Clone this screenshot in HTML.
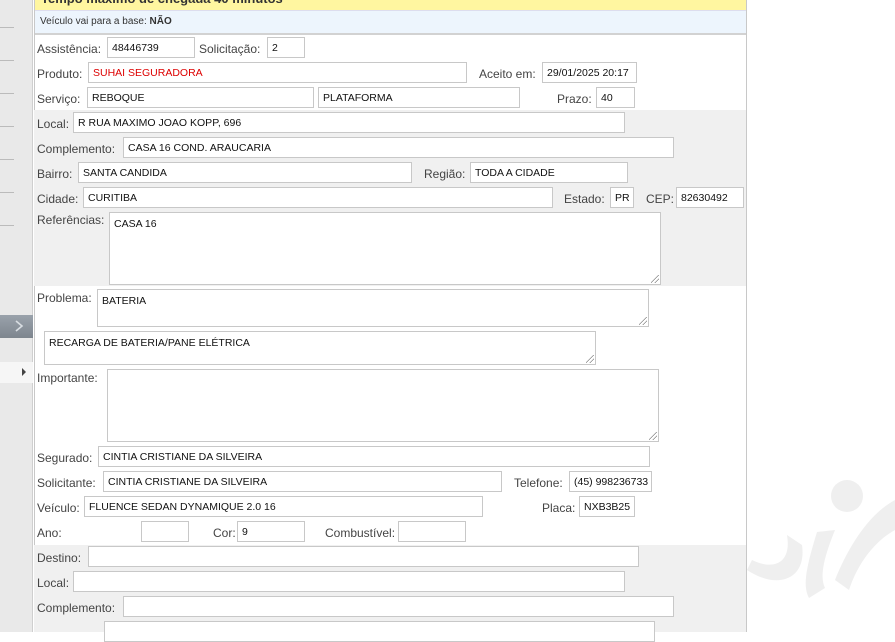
<!DOCTYPE html>
<html><head><meta charset="utf-8"><style>
*{margin:0;padding:0;box-sizing:border-box}
body{width:895px;height:632px;overflow:hidden;background:#fff;font-family:"Segoe UI","Liberation Sans",sans-serif;font-size:12px;color:#333;position:relative}
.a{position:absolute}
.i{position:absolute;height:21px;border:1px solid #c8c8c8;background:#fff;padding:0 4px;line-height:20px;color:#111;white-space:nowrap;overflow:hidden;font-size:10.5px}
.t{position:absolute;border:1px solid #c8c8c8;background:#fff;padding:5px 4px;color:#111;font-size:10.5px}
.l{position:absolute;white-space:nowrap;color:#444;margin-top:2px}
.g{position:absolute;background:#f0f0f0;left:34px;width:712px}
.rs{position:absolute;right:1px;bottom:1px;width:8px;height:8px;background:linear-gradient(135deg,transparent 45%,#888 46%,#888 52%,transparent 53%,transparent 70%,#888 71%,#888 77%,transparent 78%)}
</style></head><body>
<div class="a" style="left:0;top:0;width:33px;height:632px;background:#e9e9e9;border-right:1px solid #cfcfcf"></div>
<div class="a" style="left:0;top:27px;width:14px;height:1px;background:#bbb"></div>
<div class="a" style="left:0;top:60px;width:14px;height:1px;background:#bbb"></div>
<div class="a" style="left:0;top:93px;width:14px;height:1px;background:#bbb"></div>
<div class="a" style="left:0;top:126px;width:14px;height:1px;background:#bbb"></div>
<div class="a" style="left:0;top:159px;width:14px;height:1px;background:#bbb"></div>
<div class="a" style="left:0;top:192px;width:14px;height:1px;background:#bbb"></div>
<div class="a" style="left:0;top:225px;width:14px;height:1px;background:#bbb"></div>
<div class="a" style="left:0;top:315px;width:33px;height:23px;background:linear-gradient(#9aa2ab,#7d858e)"></div>
<svg class="a" style="left:13px;top:319px" width="12" height="14"><path d="M3 2l6 5-6 5" stroke="#d8dde2" stroke-width="1.6" fill="none"/></svg>
<div class="a" style="left:0;top:362px;width:33px;height:21px;background:#f6f6f6"></div>
<svg class="a" style="left:21px;top:368px" width="6" height="8"><path d="M1 0l4 4-4 4z" fill="#444"/></svg>
<div class="a" style="left:34px;top:0;width:1px;height:632px;background:#c8c8c8"></div>
<div class="a" style="left:746px;top:0;width:1px;height:632px;background:#c8c8c8"></div>
<div class="a" style="left:35px;top:0;width:711px;height:10px;background:#fff6a0;overflow:hidden"><div style="position:absolute;left:6px;top:-9px;font-weight:bold;font-size:13px;color:#333">Tempo máximo de chegada 40 minutos</div></div>
<div class="a" style="left:35px;top:10px;width:711px;height:23px;background:#edf5fd;border-top:1px solid #dde"></div>
<div class="l" style="left:40px;top:14px;font-size:10px;color:#333">Veículo vai para a base: <b>NÃO</b></div>
<div class="a" style="left:35px;top:33px;width:711px;height:2px;background:#d2d2d2"></div>
<div class="g" style="top:110px;height:176px"></div>
<div class="g" style="top:545px;height:87px"></div>
<svg class="a" style="left:747px;top:470px" width="148" height="162"><circle cx="100" cy="26" r="16" fill="#efefef"/><path d="M0 100 C30 120 60 110 55 75 L40 65 C45 95 25 100 5 90Z" fill="#efefef"/><path d="M70 62 C60 95 55 115 62 128 L78 118 C72 105 78 85 88 60Z" fill="#efefef"/><path d="M148 30 C120 45 100 80 88 110 L102 120 C112 90 130 70 148 60Z" fill="#efefef"/></svg>

<div class="l" style="left:37px;top:40px">Assistência:</div><div class="i" style="left:107px;top:37px;width:88px">48446739</div>
<div class="l" style="left:199px;top:40px">Solicitação:</div><div class="i" style="left:267px;top:37px;width:38px">2</div>
<div class="l" style="left:37px;top:65px">Produto:</div><div class="i" style="left:88px;top:62px;width:379px;color:#d00">SUHAI SEGURADORA</div>
<div class="l" style="left:479px;top:65px">Aceito em:</div><div class="i" style="left:542px;top:62px;width:95px">29/01/2025 20:17</div>
<div class="l" style="left:37px;top:90px">Serviço:</div><div class="i" style="left:87px;top:87px;width:227px">REBOQUE</div>
<div class="i" style="left:318px;top:87px;width:202px">PLATAFORMA</div>
<div class="l" style="left:557px;top:90px">Prazo:</div><div class="i" style="left:596px;top:87px;width:39px">40</div>
<div class="l" style="left:37px;top:115px">Local:</div><div class="i" style="left:73px;top:112px;width:552px">R RUA MAXIMO JOAO KOPP, 696</div>
<div class="l" style="left:37px;top:140px">Complemento:</div><div class="i" style="left:123px;top:137px;width:551px">CASA 16 COND. ARAUCARIA</div>
<div class="l" style="left:37px;top:165px">Bairro:</div><div class="i" style="left:78px;top:162px;width:334px">SANTA CANDIDA</div>
<div class="l" style="left:424px;top:165px">Região:</div><div class="i" style="left:470px;top:162px;width:158px">TODA A CIDADE</div>
<div class="l" style="left:37px;top:190px">Cidade:</div><div class="i" style="left:83px;top:187px;width:470px">CURITIBA</div>
<div class="l" style="left:564px;top:190px">Estado:</div><div class="i" style="left:610px;top:187px;width:24px">PR</div>
<div class="l" style="left:646px;top:190px">CEP:</div><div class="i" style="left:676px;top:187px;width:68px">82630492</div>
<div class="l" style="left:37px;top:211px">Referências:</div><div class="t" style="left:109px;top:212px;width:552px;height:73px">CASA 16<div class="rs"></div></div>
<div class="l" style="left:37px;top:289px">Problema:</div><div class="t" style="left:97px;top:289px;width:552px;height:38px">BATERIA<div class="rs"></div></div>
<div class="t" style="left:44px;top:331px;width:552px;height:34px">RECARGA DE BATERIA/PANE ELÉTRICA<div class="rs"></div></div>
<div class="l" style="left:37px;top:369px">Importante:</div><div class="t" style="left:107px;top:369px;width:552px;height:73px"><div class="rs"></div></div>
<div class="l" style="left:37px;top:449px">Segurado:</div><div class="i" style="left:98px;top:446px;width:552px">CINTIA CRISTIANE DA SILVEIRA</div>
<div class="l" style="left:37px;top:474px">Solicitante:</div><div class="i" style="left:103px;top:471px;width:399px">CINTIA CRISTIANE DA SILVEIRA</div>
<div class="l" style="left:514px;top:474px">Telefone:</div><div class="i" style="left:569px;top:471px;width:83px">(45) 998236733</div>
<div class="l" style="left:37px;top:499px">Veículo:</div><div class="i" style="left:84px;top:496px;width:399px">FLUENCE SEDAN DYNAMIQUE 2.0 16</div>
<div class="l" style="left:542px;top:499px">Placa:</div><div class="i" style="left:579px;top:496px;width:56px">NXB3B25</div>
<div class="l" style="left:37px;top:524px">Ano:</div><div class="i" style="left:141px;top:521px;width:48px"></div>
<div class="l" style="left:213px;top:524px">Cor:</div><div class="i" style="left:237px;top:521px;width:68px">9</div>
<div class="l" style="left:325px;top:524px">Combustível:</div><div class="i" style="left:398px;top:521px;width:68px"></div>
<div class="l" style="left:37px;top:549px">Destino:</div><div class="i" style="left:88px;top:546px;width:551px"></div>
<div class="l" style="left:37px;top:574px">Local:</div><div class="i" style="left:73px;top:571px;width:552px"></div>
<div class="l" style="left:37px;top:599px">Complemento:</div><div class="i" style="left:123px;top:596px;width:551px"></div>
<div class="i" style="left:104px;top:621px;width:551px"></div>
</body></html>
